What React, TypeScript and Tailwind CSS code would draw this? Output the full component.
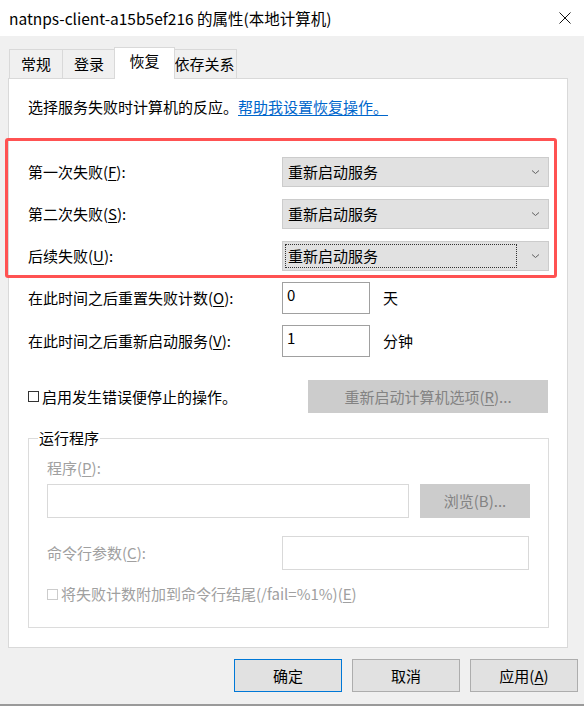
import { type ReactNode } from 'react';

const font = { fontFamily: '"Noto Sans CJK SC", "Noto Sans", sans-serif' };

function Key({ children }: { children: ReactNode }) {
  return <span className="underline underline-offset-2 decoration-1">{children}</span>;
}

function Chevron() {
  return (
    <svg width="9" height="6" viewBox="0 0 9 6" className="text-[#606060]">
      <path d="M1 1.5 L4.5 4.5 L8 1.5" fill="none" stroke="currentColor" strokeWidth="1" />
    </svg>
  );
}

function Combo({ focused }: { focused?: boolean }) {
  return (
    <div className="flex h-[30px] w-[267px] items-center border border-[#cccccc] bg-[#e1e1e1] pl-[2px] pr-[8px]">
      <div
        className={
          'mr-[14px] flex h-[24px] flex-1 items-center pl-[2px] ' +
          (focused ? 'border border-dotted border-[#333333]' : 'border border-transparent')
        }
      >
        重新启动服务
      </div>
      <Chevron />
    </div>
  );
}

function Tab({ label, active, w }: { label: string; active?: boolean; w: string }) {
  if (active) {
    return (
      <div className={`relative z-10 -mx-[2px] -mb-px flex h-[32px] ${w} items-start justify-center border border-b-0 border-[#d9d9d9] bg-white pt-[3px]`}>
        {label}
      </div>
    );
  }
  return (
    <div className={`-ml-px flex h-[29px] ${w} items-center justify-center border border-b-0 border-[#d9d9d9] bg-[#f0f0f0] first:ml-0`}>
      {label}
    </div>
  );
}

function Box({ disabled }: { disabled?: boolean }) {
  return (
    <span
      className={
        'mr-[3px] inline-block h-[11px] w-[11px] border ' +
        (disabled ? 'border-[#cccccc]' : 'border-[#333333]')
      }
    />
  );
}

export default function App() {
  return (
    <div className="relative h-[706px] w-[584px] overflow-hidden bg-[#f0f0f0] text-[15px] leading-[20px] text-black" style={font}>
      {/* title bar */}
      <div className="flex h-[36px] items-center justify-between bg-white pl-[9px] pr-[13px]">
        <span className="text-[15.5px]">natnps-client-a15b5ef216 的属性(本地计算机)</span>
        <svg width="12" height="12" viewBox="0 0 12 12">
          <path d="M0.5 0.5 L11.5 11.5 M11.5 0.5 L0.5 11.5" stroke="#111" strokeWidth="1" />
        </svg>
      </div>

      {/* tabs */}
      <div className="ml-[9px] mt-[11px] flex h-[31px] items-end">
        <Tab label="常规" w="w-[54px]" />
        <Tab label="登录" w="w-[54px]" />
        <Tab label="恢复" w="w-[61px]" active />
        <Tab label="依存关系" w="w-[65px]" />
      </div>

      {/* panel */}
      <div className="mx-[8px] h-[570px] w-[560px] border border-[#d9d9d9] bg-white px-[19px]">
        <div className="mt-[18px] flex">
          <span>选择服务失败时计算机的反应。</span>
          <span className="text-[#0066cc] underline underline-offset-2 decoration-1">帮助我设置恢复操作。</span>
        </div>

        <div className="-ml-[23px] mt-[21px] h-[140px] w-[552px] rounded-[3px] border-[3px] border-[#ff5252] pl-[20px] pt-[16px]">
          <div className="flex flex-col gap-[12px]">
            <div className="flex items-center">
              <span className="w-[254px]">第一次失败(<Key>F</Key>):</span>
              <Combo />
            </div>
            <div className="flex items-center">
              <span className="w-[254px]">第二次失败(<Key>S</Key>):</span>
              <Combo />
            </div>
            <div className="flex items-center">
              <span className="w-[254px]">后续失败(<Key>U</Key>):</span>
              <Combo focused />
            </div>
          </div>
        </div>

        <div className="mt-[4px] flex flex-col gap-[11px]">
          <div className="flex items-center">
            <span className="w-[254px]">在此时间之后重置失败计数(<Key>O</Key>):</span>
            <div className="h-[32px] w-[88px] border border-[#a0a0a0] pl-[4px] pt-[2px]">0</div>
            <span className="ml-[13px]">天</span>
          </div>
          <div className="flex items-center">
            <span className="w-[254px]">在此时间之后重新启动服务(<Key>V</Key>):</span>
            <div className="h-[32px] w-[88px] border border-[#a0a0a0] pl-[4px] pt-[2px]">1</div>
            <span className="ml-[13px]">分钟</span>
          </div>
        </div>

        <div className="mt-[23px] flex items-center justify-between">
          <span className="flex items-center">
            <Box />
            启用发生错误便停止的操作。
          </span>
          <div className="flex h-[33px] w-[240px] items-center justify-center bg-[#cccccc] text-[#838383]">
            重新启动计算机选项(<Key>R</Key>)...
          </div>
        </div>

        <fieldset className="mt-[16px] h-[199px] w-[521px] border border-[#dcdcdc] px-[18px]">
          <legend className="-ml-[9px] px-[1px] leading-[18px]">运行程序</legend>
          <div className="mt-[11px] text-[#a0a0a0]">
            程序(<Key>P</Key>):
          </div>
          <div className="mt-[6px] flex items-center">
            <div className="h-[34px] w-[362px] border border-[#d9d9d9]" />
            <div className="ml-[11px] flex h-[34px] w-[110px] items-center justify-center bg-[#cccccc] text-[#838383]">
              浏览(B)...
            </div>
          </div>
          <div className="mt-[18px] flex items-center">
            <span className="w-[235px] text-[#a0a0a0]">
              命令行参数(<Key>C</Key>):
            </span>
            <div className="h-[34px] w-[247px] border border-[#d9d9d9]" />
          </div>
          <div className="mt-[14px] flex items-center text-[#a0a0a0]">
            <Box disabled />
            将失败计数附加到命令行结尾(/fail=%1%)(<Key>E</Key>)
          </div>
        </fieldset>
      </div>

      {/* buttons */}
      <div className="mt-[11px] flex justify-end gap-[10px] pr-[6px]">
        <div className="flex h-[33px] w-[108px] items-center justify-center border border-[#0078d7] bg-[#e1e1e1]">确定</div>
        <div className="flex h-[33px] w-[108px] items-center justify-center border border-[#adadad] bg-[#e1e1e1]">取消</div>
        <div className="flex h-[33px] w-[108px] items-center justify-center border border-[#adadad] bg-[#e1e1e1]">
          应用(<Key>A</Key>)
        </div>
      </div>
      <div className="absolute bottom-0 left-0 h-[2px] w-full bg-[#9a9a9a]" />
    </div>
  );
}
